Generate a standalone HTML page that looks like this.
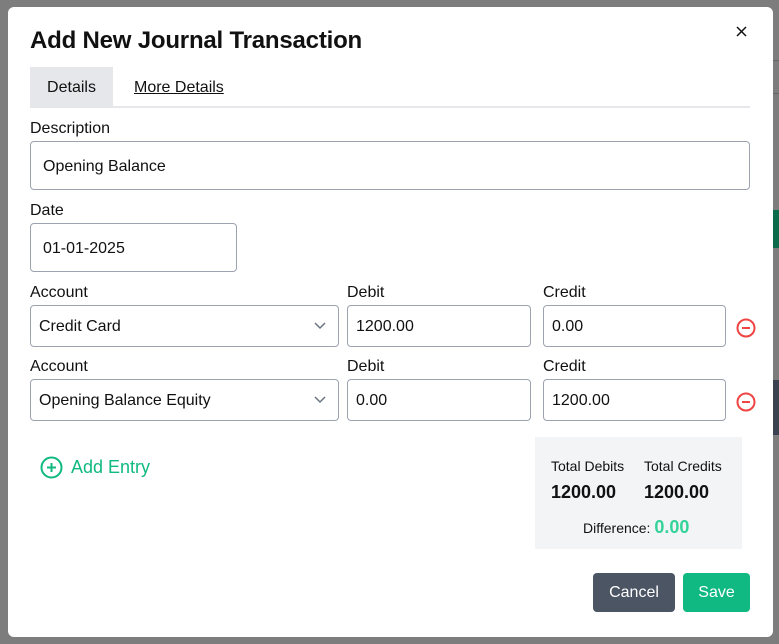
<!DOCTYPE html>
<html><head><style>
*{box-sizing:border-box;margin:0;padding:0}
body{width:779px;height:644px;background:#7d7d7d;position:relative;overflow:hidden;font-family:"Liberation Sans",sans-serif;color:#111}
.bg1{position:absolute;left:773px;top:210px;width:10px;height:38px;background:#0b6b4b}
.bg2{position:absolute;left:773px;top:380px;width:10px;height:55px;background:#3b4350}
.ln{position:absolute;left:773px;width:10px;height:1px;background:#666}
.modal{position:absolute;left:8px;top:7px;width:765px;height:630px;background:#fff;border-radius:6px}
.a{position:absolute}
h1{position:absolute;left:22px;top:20px;font-size:24px;font-weight:bold;letter-spacing:-0.2px}
.lbl{position:absolute;font-size:16px;color:#111}
.inp{position:absolute;border:1px solid #9ca3af;border-radius:4px;font-size:16px;display:flex;align-items:center;padding-left:12px;padding-top:2px;background:#fff}
.sm{padding-left:8px}
.chev{position:absolute;right:12px;top:16px}
.minus{position:absolute}
</style></head><body>
<div class="ln" style="top:60px"></div><div class="ln" style="top:93px"></div>
<div class="bg1"></div><div class="bg2"></div>
<div class="modal">
<h1>Add New Journal Transaction</h1>
<svg class="a" style="left:728px;top:19px" width="11" height="11" viewBox="0 0 11 11"><path d="M1 1l9 9M10 1l-9 9" stroke="#111" stroke-width="1.5"/></svg>
<div class="a" style="left:22px;top:60px;width:83px;height:40px;background:#e5e7eb;font-size:16px;display:flex;align-items:center;justify-content:center;padding-top:2px">Details</div>
<div class="a" style="left:126px;top:72px;font-size:16px;text-decoration:underline">More Details</div>
<div class="a" style="left:22px;top:99px;width:720px;height:2px;background:#e5e7eb"></div>
<div class="lbl" style="left:22px;top:113px">Description</div>
<div class="inp" style="left:22px;top:134px;width:720px;height:49px">Opening Balance</div>
<div class="lbl" style="left:22px;top:195px">Date</div>
<div class="inp" style="left:22px;top:216px;width:207px;height:49px">01-01-2025</div>

<div class="lbl" style="left:22px;top:277px">Account</div>
<div class="lbl" style="left:339px;top:277px">Debit</div>
<div class="lbl" style="left:535px;top:277px">Credit</div>
<div class="inp sm" style="left:22px;top:298px;width:309px;height:42px">Credit Card<svg class="chev" width="12" height="8" viewBox="0 0 12 8"><path d="M1 1l5 5 5-5" fill="none" stroke="#6b7280" stroke-width="1.5"/></svg></div>
<div class="inp sm" style="left:339px;top:298px;width:184px;height:42px">1200.00</div>
<div class="inp sm" style="left:535px;top:298px;width:183px;height:42px">0.00</div>
<svg class="minus" style="left:727px;top:310px" width="22" height="22" viewBox="0 0 22 22"><circle cx="11" cy="11" r="8.5" fill="none" stroke="#ef4444" stroke-width="2"/><path d="M7 11h8" stroke="#ef4444" stroke-width="2"/></svg>

<div class="lbl" style="left:22px;top:351px">Account</div>
<div class="lbl" style="left:339px;top:351px">Debit</div>
<div class="lbl" style="left:535px;top:351px">Credit</div>
<div class="inp sm" style="left:22px;top:372px;width:309px;height:42px">Opening Balance Equity<svg class="chev" width="12" height="8" viewBox="0 0 12 8"><path d="M1 1l5 5 5-5" fill="none" stroke="#6b7280" stroke-width="1.5"/></svg></div>
<div class="inp sm" style="left:339px;top:372px;width:184px;height:42px">0.00</div>
<div class="inp sm" style="left:535px;top:372px;width:183px;height:42px">1200.00</div>
<svg class="minus" style="left:727px;top:384px" width="22" height="22" viewBox="0 0 22 22"><circle cx="11" cy="11" r="8.5" fill="none" stroke="#ef4444" stroke-width="2"/><path d="M7 11h8" stroke="#ef4444" stroke-width="2"/></svg>

<svg class="a" style="left:32px;top:449px" width="23" height="23" viewBox="0 0 23 23"><circle cx="11.5" cy="11.5" r="10" fill="none" stroke="#10b981" stroke-width="2"/><path d="M11.5 7v9M7 11.5h9" stroke="#10b981" stroke-width="2"/></svg>
<div class="a" style="left:63px;top:450px;font-size:18px;color:#10b981">Add Entry</div>

<div class="a" style="left:527px;top:430px;width:207px;height:112px;background:#f3f4f6"></div>
<div class="a" style="left:543px;top:451px;font-size:14px">Total Debits</div>
<div class="a" style="left:636px;top:451px;font-size:14px">Total Credits</div>
<div class="a" style="left:543px;top:475px;font-size:18px;font-weight:bold">1200.00</div>
<div class="a" style="left:636px;top:475px;font-size:18px;font-weight:bold">1200.00</div>
<div class="a" style="left:575px;top:510px;font-size:14px">Difference: <span style="color:#34d399;font-size:18px;font-weight:bold">0.00</span></div>

<div class="a" style="left:585px;top:566px;width:82px;height:39px;background:#4b5563;border-radius:4px;color:#fff;font-size:16px;display:flex;align-items:center;justify-content:center">Cancel</div>
<div class="a" style="left:675px;top:566px;width:67px;height:39px;background:#10b981;border-radius:4px;color:#fff;font-size:16px;display:flex;align-items:center;justify-content:center">Save</div>
</div>
</body></html>
